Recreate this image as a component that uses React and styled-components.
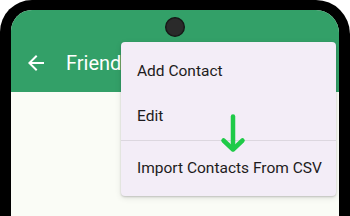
import React from "react";
import styled, { createGlobalStyle } from "styled-components";

const Global = createGlobalStyle`
  html, body { margin: 0; padding: 0; background: #ffffff; overflow: hidden; }
  body { font-family: Roboto, "Noto Sans", sans-serif; }
`;

const Frame = styled.div`
  width: 350px;
  height: 216px;
  box-sizing: border-box;
  padding: 10px 11px 0 11px;
  background: #000;
  border-radius: 32px 34px 0 0;
`;

const Screen = styled.div`
  position: relative;
  height: 100%;
  border-radius: 21px 23px 0 0;
  overflow: hidden;
  background: #fafcf6;
  display: flex;
  flex-direction: column;
`;

const AppBar = styled.header`
  background: #33a068;
  padding-top: 24px;
  height: 82px;
  box-sizing: border-box;
`;

const BarRow = styled.div`
  height: 58px;
  display: flex;
  align-items: center;
  padding-left: 13px;
  gap: 18px;
  color: #ffffff;
`;

const Title = styled.h1`
  margin: 0;
  font-family: Roboto, sans-serif;
  font-weight: 400;
  font-size: 20px;
  line-height: 1;
  color: #ffffff;
`;

const Camera = styled.div`
  position: absolute;
  left: 154px;
  top: 7px;
  width: 20px;
  height: 20px;
  border-radius: 50%;
  background: radial-gradient(circle at 50% 50%, #2a2a2a 0 55%, #0c0c0c 70%);
`;

const Menu = styled.div`
  position: absolute;
  left: 110px;
  top: 32px;
  width: 215px;
  height: 154px;
  box-sizing: border-box;
  padding: 6px 0;
  background: #f3edf7;
  border-radius: 4px;
  box-shadow: 0 1px 2px rgba(0, 0, 0, 0.18), 0 2px 6px rgba(0, 0, 0, 0.1);
  display: flex;
  flex-direction: column;
`;

const Item = styled.div`
  height: 45px;
  display: flex;
  align-items: center;
  padding-left: 16px;
  font-family: Roboto, sans-serif;
  font-size: 15.5px;
  color: #1d1b20;
  white-space: nowrap;
`;

const Divider = styled.div`
  height: 1px;
  background: #dcd7df;
  margin: 2px 0 4px;
`;

const Pointer = styled.svg`
  position: absolute;
  left: 208px;
  top: 100px;
`;

const BackIcon = () => (
  <svg width="24" height="24" viewBox="0 0 24 24" fill="#ffffff">
    <path d="M20 11H7.83l5.59-5.59L12 4l-8 8 8 8 1.41-1.41L7.83 13H20v-2z" />
  </svg>
);

export default function App() {
  return (
    <>
      <Global />
      <Frame>
        <Screen>
          <AppBar>
            <BarRow>
              <BackIcon />
              <Title>Friends</Title>
            </BarRow>
          </AppBar>
          <Camera />
          <Menu>
            <Item>Add Contact</Item>
            <Item>Edit</Item>
            <Divider />
            <Item>Import Contacts From CSV</Item>
          </Menu>
          <Pointer width="28" height="46" viewBox="0 0 28 46">
            <g fill="none" stroke="#1fca48" strokeWidth="4.5" strokeLinecap="round" strokeLinejoin="round">
              <path d="M14 6.5V38.5" />
              <path d="M4.5 30.5L14 39.5L23.5 30.5" />
            </g>
          </Pointer>
        </Screen>
      </Frame>
    </>
  );
}
